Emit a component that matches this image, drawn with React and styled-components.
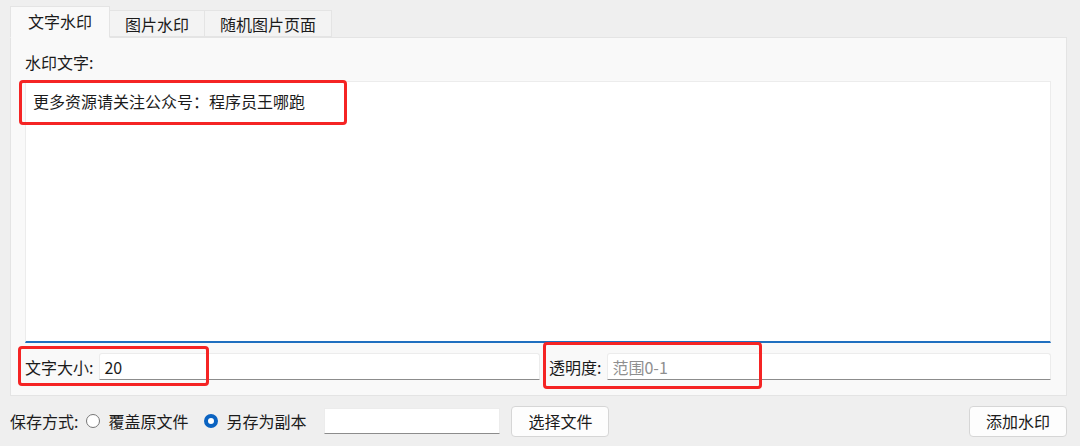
import React from 'react'
import styled, { createGlobalStyle } from 'styled-components'

const GlobalStyle = createGlobalStyle`
  html, body {
    margin: 0;
    padding: 0;
    background: #efefef;
  }
  body {
    font-family: "Noto Sans CJK SC", "Noto Sans", sans-serif;
    font-size: 15px;
    color: #1b1b1b;
  }
`;

function App() {
  return (
    <>
      <GlobalStyle />
      <Window>
        <TabBar>
          <Tab active>文字水印</Tab>
          <Tab>图片水印</Tab>
          <Tab>随机图片页面</Tab>
        </TabBar>
        <Panel>
          <FieldLabel>水印文字:</FieldLabel>
          <TextArea defaultValue="更多资源请关注公众号：程序员王哪跑" />
          <InputRow>
            <Field>
              <InlineLabel>文字大小:</InlineLabel>
              <TextInput defaultValue="20" />
            </Field>
            <Field>
              <InlineLabel>透明度:</InlineLabel>
              <TextInput placeholder="范围0-1" />
            </Field>
          </InputRow>
          <Mark style={{ left: 8, top: 42, width: 328, height: 45 }} />
          <Mark style={{ left: 7, top: 308, width: 191, height: 40 }} />
          <Mark style={{ left: 532, top: 304, width: 219, height: 47 }} />
        </Panel>
        <BottomBar>
          <InlineLabel>保存方式:</InlineLabel>
          <RadioOption>
            <Radio />
            覆盖原文件
          </RadioOption>
          <RadioOption>
            <Radio checked />
            另存为副本
          </RadioOption>
          <PathInput />
          <Button>选择文件</Button>
          <Spacer />
          <Button>添加水印</Button>
        </BottomBar>
      </Window>
    </>
  )
}

const Window = styled.div`
  width: 1080px;
  height: 446px;
  box-sizing: border-box;
  padding: 6px 13px 0 10px;
  display: flex;
  flex-direction: column;
`;

const TabBar = styled.div`
  display: flex;
  align-items: flex-end;
  height: 31px;
  position: relative;
  z-index: 1;
`;

const Tab = styled.div`
  box-sizing: border-box;
  height: ${p => (p.active ? '32px' : '27px')};
  padding: 0 15px;
  display: flex;
  align-items: center;
  font-size: 16px;
  background: ${p => (p.active ? '#f9f9f9' : '#f3f3f3')};
  border: 1px solid #e4e4e4;
  border-bottom: ${p => (p.active ? '1px solid #f9f9f9' : '1px solid #e4e4e4')};
  margin-bottom: ${p => (p.active ? '-1px' : '0')};
  padding-bottom: ${p => (p.active ? '3px' : '0')};
  & + & {
    border-left: none;
  }
  &:first-child {
    width: 100px;
    justify-content: center;
  }
`;

const Panel = styled.div`
  position: relative;
  box-sizing: border-box;
  height: 359px;
  background: #f9f9f9;
  border: 1px solid #e4e4e4;
  padding: 12px 15px 15px 14px;
  display: flex;
  flex-direction: column;
`;

const FieldLabel = styled.div`
  font-size: 16px;
  line-height: 24px;
  height: 31px;
`;

const TextArea = styled.textarea`
  box-sizing: border-box;
  height: 262px;
  resize: none;
  border: 1px solid #ececec;
  border-bottom: 2px solid #1f6fbf;
  background: #ffffff;
  padding: 7px 7px;
  font-family: "Noto Sans CJK SC", "Noto Sans", sans-serif;
  font-size: 16px;
  line-height: 24px;
  color: #1b1b1b;
  outline: none;
`;

const InputRow = styled.div`
  display: grid;
  grid-template-columns: 515px 1fr;
  column-gap: 9px;
  margin-top: 10px;
`;

const Field = styled.div`
  display: flex;
  align-items: center;
  gap: 6px;
`;

const InlineLabel = styled.span`
  font-size: 16px;
  white-space: nowrap;
`;

const TextInput = styled.input`
  flex: 1;
  min-width: 0;
  box-sizing: border-box;
  height: 27px;
  border: 1px solid #ececec;
  border-bottom: 1px solid #8c8c8c;
  border-radius: 3px 3px 0 0;
  background: #ffffff;
  padding: 0 4px;
  font-family: "Noto Sans CJK SC", "Noto Sans", sans-serif;
  font-size: 16px;
  color: #1b1b1b;
  outline: none;
  &::placeholder {
    color: #8f8f8f;
  }
`;

const Mark = styled.div`
  position: absolute;
  box-sizing: border-box;
  border: 3px solid #f52424;
  border-radius: 4px;
  pointer-events: none;
`;

const BottomBar = styled.div`
  display: flex;
  align-items: center;
  height: 50px;
`;

const RadioOption = styled.label`
  display: flex;
  align-items: center;
  gap: 8px;
  margin-left: 8px;
  margin-right: 8px;
  font-size: 16px;
`;

const Radio = styled.span`
  box-sizing: border-box;
  width: 14px;
  height: 14px;
  border-radius: 50%;
  border: ${p => (p.checked ? '4px solid #0b63c1' : '1px solid #777')};
  background: #fff;
`;

const PathInput = styled.input`
  box-sizing: border-box;
  width: 176px;
  height: 26px;
  margin-left: 10px;
  border: 1px solid #ececec;
  border-bottom: 1px solid #8c8c8c;
  background: #fff;
  outline: none;
`;

const Button = styled.button`
  box-sizing: border-box;
  width: 98px;
  height: 31px;
  margin-left: 11px;
  border: 1px solid #d6d6d6;
  border-radius: 4px;
  background: #fdfdfd;
  font-family: "Noto Sans CJK SC", "Noto Sans", sans-serif;
  font-size: 16px;
  color: #1b1b1b;
`;

const Spacer = styled.div`
  flex: 1;
`;

export default App
